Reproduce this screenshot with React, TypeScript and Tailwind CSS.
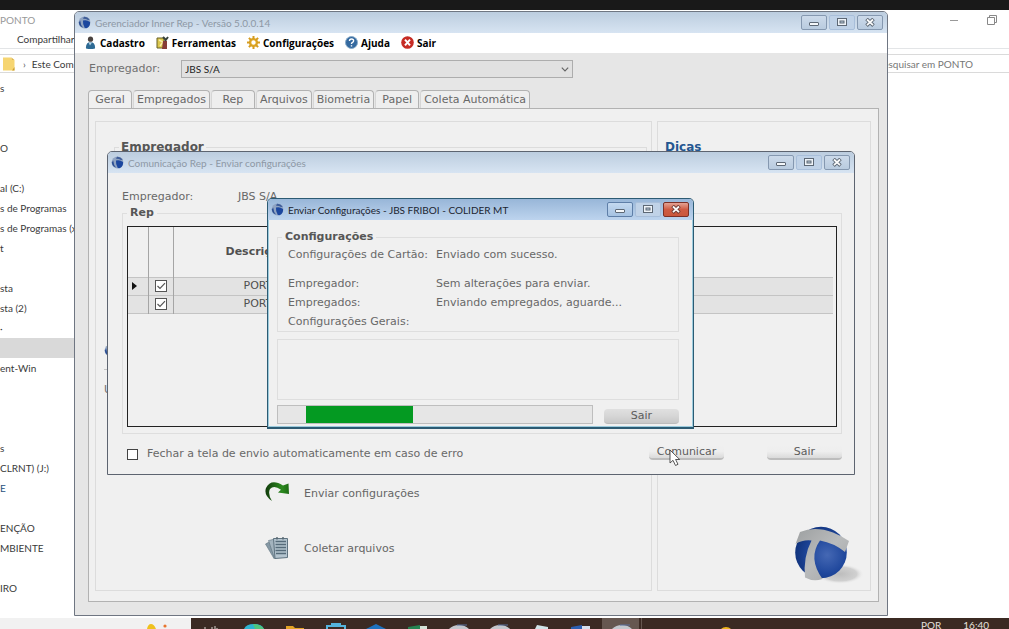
import type { ReactNode } from 'react'
import clsx from 'clsx'

const verdana = "font-['DejaVu_Sans',sans-serif]"
const segoe = "font-['Lato','Open_Sans',sans-serif]"

function Ball({ className }: { className?: string }) {
  return (
    <svg viewBox="0 0 70 62" className={className} aria-hidden="true">
      <defs>
        <radialGradient id="ball" cx="0.62" cy="0.55" r="0.6">
          <stop offset="0" stopColor="#4568b4" />
          <stop offset="0.6" stopColor="#1f479c" />
          <stop offset="1" stopColor="#12357f" />
        </radialGradient>
        <linearGradient id="band" x1="0" y1="0" x2="1" y2="1">
          <stop offset="0" stopColor="#9da0a1" />
          <stop offset="0.5" stopColor="#b9bbbc" />
          <stop offset="1" stopColor="#a3a5a6" />
        </linearGradient>
        <radialGradient id="shade">
          <stop offset="0" stopColor="#bdbdbd" />
          <stop offset="0.7" stopColor="#d0d0d0" />
          <stop offset="1" stopColor="#f0f0f0" stopOpacity="0" />
        </radialGradient>
      </defs>
      <ellipse cx="46" cy="49" rx="24" ry="10" fill="url(#shade)" />
      <circle cx="27" cy="27.5" r="25.8" fill="url(#ball)" />
      <path d="M1.5 19 L6 7 Q21 1 39 7.5 Q48 11 55 16 L51 27 Q40 18 26 15.5 Q13.5 33 28.5 54 Q19 57 11 52.5 Q9 32 17.5 15.5 Q9 14.5 1.5 19Z" fill="url(#band)" />
    </svg>
  )
}

function SmallBall() {
  return (
    <svg viewBox="0 0 13 13" className="size-[13px] shrink-0" aria-hidden="true">
      <circle cx="6.5" cy="6.5" r="5.9" fill="#8fa3c2" />
      <path d="M2.2 4.5 Q2.6 9 5 11.5 Q1.2 10.5 0.8 6.5Z" fill="#2c4f94" />
      <path d="M6 0.8 Q9.5 0.6 11.8 3.8 L10 4 Q8 2.7 5 2.8Z" fill="#3d5c98" />
      <path d="M5 4.6 Q8.5 3.4 12 6 Q12.5 10.5 8.5 12.2 L6.8 12 Q4.5 8.5 5 4.6Z" fill="#1c479f" />
    </svg>
  )
}

function CaptionButton({ kind, active, danger }: { kind: 'min' | 'max' | 'close'; active?: boolean; danger?: boolean }) {
  const label = { min: 'Minimizar', max: 'Maximizar', close: 'Fechar' }[kind]
  const ink = danger ? '#6d3a34' : '#5d6875'
  return (
    <button
      type="button"
      aria-label={label}
      className={clsx(
        'flex h-[15px] w-[26px] items-center justify-center rounded-[2px] border',
        danger && 'border-[#7c3027] bg-gradient-to-b from-[#e3a294] via-[#cf5b43] to-[#c9573c]',
        !danger && kind === 'max' && 'border-[#a9bfda] bg-[#c0d2e7]',
        !danger && kind !== 'max' && active && 'border-[#5f7fa8] bg-gradient-to-b from-[#c4d9f0] to-[#a5c2e2]',
        !danger && kind !== 'max' && !active && 'border-[#8598b0] bg-gradient-to-b from-[#ccdaea] to-[#b9cbdf]',
      )}
    >
      <svg viewBox="0 0 10 9" className="h-[9px] w-[10px]" aria-hidden="true">
        {kind === 'min' && <rect x="0.5" y="4.5" width="9" height="3" rx="0.5" fill="#f4f7fa" stroke={ink} />}
        {kind === 'max' && (
          <>
            <rect x="0.5" y="0.5" width="9" height="7" fill="#eef3f8" stroke={ink} />
            <rect x="3" y="3" width="4" height="2" fill="#b9c9da" stroke={ink} />
          </>
        )}
        {kind === 'close' && (
          <>
            <path d="M1.5 1 L8.5 7.6 M8.5 1 L1.5 7.6" stroke={ink} strokeWidth="3.6" />
            <path d="M2 1.5 L8 7.1 M8 1.5 L2 7.1" stroke="#fbfbfb" strokeWidth="1.8" />
          </>
        )}
      </svg>
    </button>
  )
}

function TitleBar({ title, active }: { title: string; active?: boolean }) {
  return (
    <div
      className={clsx(
        segoe,
        'flex h-[21px] shrink-0 items-center gap-1 pr-1 pl-[3px] text-[10px] leading-4',
        active
          ? 'bg-gradient-to-b from-[#98b6d8] to-[#bdd4ee] text-[#1c2430]'
          : 'bg-gradient-to-b from-[#bccddf] to-[#d7e4f2] text-[#8d98a5]',
      )}
    >
      <SmallBall />
      <span className="grow truncate">{title}</span>
      <div className="flex gap-[2px]">
        <CaptionButton kind="min" active={active} />
        <CaptionButton kind="max" active={active} />
        <CaptionButton kind="close" active={active} danger={active} />
      </div>
    </div>
  )
}

function PillButton({ children, solid }: { children: ReactNode; solid?: boolean }) {
  return (
    <button
      type="button"
      className={clsx(
        'h-[15px] w-[75px] rounded-[4px] text-[11px] leading-[13px] text-[#5c5c5c]',
        solid
          ? 'border-b border-[#bcbcbc] bg-gradient-to-b from-[#e0e0e0] via-[#d6d6d6] to-[#c8c8c8]'
          : 'border-b-2 border-[#bdbdbd] bg-gradient-to-b from-[#f0f0f0] via-[#eeeeee] to-[#dadada]',
      )}
    >
      {children}
    </button>
  )
}

const folders = [
  's', '', '', 'O', '', 'al (C:)', 's de Programas', 's de Programas (x', 't', '', 'sta', 'sta (2)', '·', '', 'ent-Win',
  '', '', '', 's', 'CLRNT) (J:)', 'E', '', 'ENÇÃO', 'MBIENTE', '', 'IRO',
]

function Explorer() {
  return (
    <div className={clsx(segoe, 'flex min-h-0 grow flex-col overflow-hidden bg-white text-[10px] leading-5 text-[#3a3a3a]')}>
      <div className="flex h-[19px] shrink-0 items-center justify-between pr-3 text-[#999999]">
        <span>PONTO</span>
        <div className="flex items-center gap-7">
          <svg viewBox="0 0 10 10" className="size-[10px]" aria-hidden="true">
            <path d="M1 5.5H9" stroke="#999" />
          </svg>
          <svg viewBox="0 0 10 10" className="size-[10px]" aria-hidden="true">
            <path d="M0.5 2.5H7.5V9.5H0.5Z M2.5 2.5V0.5H9.5V7.5H7.5" fill="none" stroke="#888" />
          </svg>
        </div>
      </div>
      <div className="h-5 shrink-0 border-b border-[#e3e5e7] pl-[17px]">Compartilhar</div>
      <div className="mt-[5px] flex h-[19px] shrink-0 items-center border-y border-[#dadada] pr-9 pl-[3px]">
        <svg viewBox="0 0 12 14" className="mr-2 h-[14px] w-3" aria-hidden="true">
          <path d="M0 0.5H8.5V3H11.5V13.5H0Z" fill="#f6d571" />
          <path d="M8.5 0.5V3H11.5" fill="#dfb64b" />
          <path d="M9 13.5L11.5 10V13.5Z" fill="#c99c33" />
        </svg>
        <span className="mr-[6px] text-[#555]">›</span>
        <span className="grow">Este Com</span>
        <span className="text-[#777]">Pesquisar em PONTO</span>
      </div>
      <ul className="mt-[5px]">
        {folders.map((name, i) => (
          <li key={i} className={clsx('h-5 w-[90px] overflow-hidden whitespace-nowrap', i === 13 && 'bg-[#d9d9d9]', name === 'E' && 'text-[#29527c]')}>
            {name}
          </li>
        ))}
      </ul>
    </div>
  )
}

const menu: { label: string; icon: ReactNode }[] = [
  {
    label: 'Cadastro',
    icon: (
      <>
        <circle cx="6.5" cy="3.2" r="2.6" fill="#4a4340" />
        <path d="M2 12.5 Q1.5 6.2 6.5 6.2 Q11.5 6.2 11 12.5 Q6.5 13.5 2 12.5Z" fill="#2d6a94" />
        <path d="M4.5 6.5L6 9.5L8 6.5Z" fill="#b7d4e6" />
      </>
    ),
  },
  {
    label: 'Ferramentas',
    icon: (
      <>
        <path d="M1 2H8V12H1Z" fill="#dcc74d" stroke="#676027" />
        <path d="M3 4L7 6L4 10" fill="none" stroke="#f8efab" strokeWidth="1.5" />
        <path d="M7 5H11V13H6Z" fill="#873c36" />
        <path d="M7 1L10 4M12 1L9 5" stroke="#36413b" strokeWidth="2" />
      </>
    ),
  },
  {
    label: 'Configurações',
    icon: (
      <>
        <circle cx="6.5" cy="6.5" r="3.4" fill="none" stroke="#dda522" strokeWidth="2.4" />
        <path
          d="M6.5 0V3M6.5 10V13M0 6.5H3M10 6.5H13M1.9 1.9L4 4M9 9L11.1 11.1M11.1 1.9L9 4M4 9L1.9 11.1"
          stroke="#d59c20"
          strokeWidth="2"
        />
      </>
    ),
  },
  {
    label: 'Ajuda',
    icon: (
      <>
        <circle cx="6.5" cy="6.5" r="6" fill="#34699f" stroke="#88abc9" />
        <path d="M4.5 5Q4.5 3 6.6 3T8.6 5Q8.5 6 7.2 6.6Q6.5 7 6.5 8M6.5 9.2V10.5" fill="none" stroke="#fff" strokeWidth="1.4" />
      </>
    ),
  },
  {
    label: 'Sair',
    icon: (
      <>
        <circle cx="6.5" cy="6.5" r="6.3" fill="#c62b24" />
        <path d="M4 3.7L9 9.3M9 3.7L4 9.3" stroke="#fff" strokeWidth="2" />
      </>
    ),
  },
]

const tabs = ['Geral', 'Empregados', 'Rep', 'Arquivos', 'Biometria', 'Papel', 'Coleta Automática']

function MainWindow() {
  return (
    <section className="absolute top-[11px] right-[121px] bottom-[13px] left-[74px] flex flex-col overflow-hidden rounded-t-[5px] border border-[#6f7682] bg-[#e6e6e6]">
      <TitleBar title="Gerenciador Inner Rep - Versão 5.0.0.14" />
      <nav className="flex h-5 shrink-0 items-center gap-[11px] bg-white pl-[9px] font-['Open_Sans',sans-serif] text-[10px] leading-4 font-bold text-black">
        {menu.map((m) => (
          <button key={m.label} type="button" className="flex items-center gap-[3px] pb-px">
            <svg viewBox="0 0 13 13" className="size-[13px]" aria-hidden="true">
              {m.icon}
            </svg>
            {m.label}
          </button>
        ))}
      </nav>
      <div className="flex h-[37px] shrink-0 items-center pb-[6px] pl-[14px] text-[#707070]">
        <label htmlFor="company" className="w-[92px] text-[11px] leading-4">
          Empregador:
        </label>
        <div className="relative">
          <select
            id="company"
            className={clsx(segoe, 'block h-[18px] w-[392px] appearance-none border border-[#adadad] bg-[#e1e1e1] px-[3px] text-[10px] leading-4 text-[#222]')}
          >
            <option>JBS S/A</option>
          </select>
          <svg viewBox="0 0 8 5" className="pointer-events-none absolute top-[7px] right-1 h-[5px] w-2" aria-hidden="true">
            <path d="M0.8 0.6L4 3.8L7.2 0.6" fill="none" stroke="#666" strokeWidth="1.2" />
          </svg>
        </div>
      </div>
      <div className="mx-[13px] flex items-end gap-px" role="tablist">
        {tabs.map((t, i) => (
          <button
            key={t}
            type="button"
            role="tab"
            aria-selected={i === 0}
            className={clsx(
              'h-[18px] min-w-[44px] rounded-t-[4px] border border-b-0 border-[#b2b2b2] px-[3px] text-[11px] leading-4 text-[#686868]',
              i === 0 ? 'bg-[#f0f0f0]' : 'border-l-[#d6d6d6] bg-[#eeeeee]',
            )}
          >
            {t}
          </button>
        ))}
      </div>
      <div className="mr-[8px] mb-[13px] ml-[13px] flex grow gap-[5px] border border-[#b2b2b2] bg-[#f0f0f0] pt-3 pr-[7px] pb-[10px] pl-[6px]">
        <div className="flex grow flex-col border border-[#dcdcdc] pt-4 pr-1 pl-[8px]">
          <fieldset className="ml-[10px] h-[206px] border border-[#dcdcdc] px-1">
            <legend className="px-[2px] text-[12px] leading-[18px] font-bold text-[#565656]">Empregador</legend>
          </fieldset>
          <div className="flex h-[130px] flex-col text-[11px] leading-4 text-[#707070]">
            <SmallBall />
            <hr className="mt-[12px] mb-[12px] w-10 border-[#c4c4c4]" />
            <span>U</span>
          </div>
          <div className="mt-2 ml-[161px] flex flex-col gap-[31px] text-[11px] text-[#666]">
            <a href="#enviar" className="flex items-center gap-[15px]">
              <svg viewBox="0 0 24 24" className="size-6" aria-hidden="true">
                <defs>
                  <linearGradient id="arrow" x1="0" x2="1">
                    <stop offset="0" stopColor="#123c0c" />
                    <stop offset="0.7" stopColor="#2c8a1f" />
                    <stop offset="1" stopColor="#1d6b14" />
                  </linearGradient>
                </defs>
                <path d="M7 19 Q-1.5 13 1 6 Q6 -4 18 3.5 L23.5 1.5 L24 12 L13 10.5 L16 7.8 Q9 2.5 5 7 Q2.5 12 7 19Z" fill="url(#arrow)" />
              </svg>
              Enviar configurações
            </a>
            <a href="#coletar" className="flex items-center gap-[15px]">
              <svg viewBox="0 0 24 24" className="size-6" aria-hidden="true">
                <path d="M0.5 7L6 4L11 19L9 21.500Z" fill="#8598a5" stroke="#60737f" strokeWidth="0.6" />
                <path d="M3.5 3.500L10 2L12 20L9.500 21.500Z" fill="#a3b3be" stroke="#60737f" strokeWidth="0.6" />
                <path d="M8.5 1.5H22.500V20.5L10 21.5Z" fill="#b4c4cf" stroke="#5f7380" />
                <path d="M10.5 4.500H21M10.5 7.500H21M10.5 10.500H21M10.5 13.500H21M11 16.500H21" stroke="#566b7a" strokeWidth="1.4" />
                <path d="M12 0V2.500M18 0V2.500" stroke="#56656f" strokeWidth="1.4" />
              </svg>
              Coletar arquivos
            </a>
          </div>
        </div>
        <aside className="flex w-[214px] shrink-0 flex-col justify-between border border-[#dcdcdc] pt-4 pb-[3px] pl-[7px]">
          <h2 className="text-[12px] leading-[18px] font-bold text-[#245791]">Dicas</h2>
          <Ball className="mr-[6px] h-[62px] w-[70px] self-end" />
        </aside>
      </div>
    </section>
  )
}

function RepTable() {
  return (
    <div className="grow border border-[#222] pr-[3px]">
      <table className="w-full table-fixed border-collapse text-[11px] leading-4 text-[#505050]">
        <colgroup>
          <col className="w-[20px]" />
          <col className="w-[25px]" />
          <col />
        </colgroup>
        <thead>
          <tr className="h-[50px] border-b border-[#c4c4c4]">
            <th aria-label="Atual" className="border-r border-[#a5a5a5]" />
            <th aria-label="Selecionado" className="border-r border-[#a5a5a5]" />
            <th className="pl-[52px] text-left">Descrição</th>
          </tr>
        </thead>
        <tbody>
          {[0, 1].map((row) => (
            <tr key={row} className="h-[18px] border-b border-[#c4c4c4] bg-[#e3e3e3]">
              <td className="border-r border-[#a5a5a5] p-0">
                {row === 0 && (
                  <svg viewBox="0 0 5 8" className="ml-1 h-2 w-[5px]" aria-hidden="true">
                    <path d="M0 0L5 4L0 8Z" fill="#111" />
                  </svg>
                )}
              </td>
              <td className="border-r border-[#a5a5a5] p-0">
                <div className="relative mx-auto size-3">
                  <input type="checkbox" defaultChecked aria-label={`PORT ${row + 1}`} className="block size-3 appearance-none border border-[#555] bg-white" />
                  <svg viewBox="0 0 12 12" className="pointer-events-none absolute inset-0" aria-hidden="true">
                    <path d="M2.5 6L5 8.5L10 3.2" fill="none" stroke="#555" strokeWidth="1.2" />
                  </svg>
                </div>
              </td>
              <td className="p-0 pl-[70px]">PORT</td>
            </tr>
          ))}
        </tbody>
      </table>
    </div>
  )
}

function CommunicationDialog() {
  return (
    <section className="absolute top-[151px] left-[107px] flex h-[324px] w-[748px] flex-col overflow-hidden rounded-t-[5px] border border-[#5d6470] bg-[#f0f0f0] text-[11px] text-[#686868]">
      <TitleBar title="Comunicação Rep - Enviar configurações" />
      <div className="flex grow flex-col pt-4 pr-3 pl-[14px]">
        <p className="flex leading-4">
          <span className="w-[116px]">Empregador:</span>
          <span>JBS S/A</span>
        </p>
        <fieldset className="h-[229px] border border-[#dedede] px-1">
          <legend className="px-[3px] leading-4 font-bold text-[#565656]">Rep</legend>
          <div className="flex h-[206px] flex-col pt-[5px]">
            <RepTable />
          </div>
        </fieldset>
        <div className="flex h-9 items-center gap-[43px] pl-[5px]">
          <label className="flex grow items-center gap-[9px] pt-1">
            <input type="checkbox" className="size-[11px] appearance-none border border-[#444] bg-white" />
            Fechar a tela de envio automaticamente em caso de erro
          </label>
          <PillButton>Comunicar</PillButton>
          <PillButton>Sair</PillButton>
        </div>
      </div>
    </section>
  )
}

const status = [
  ['Configurações de Cartão:', 'Enviado com sucesso.'],
  ['Empregador:', 'Sem alterações para enviar.'],
  ['Empregados:', 'Enviando empregados, aguarde...'],
  ['Configurações Gerais:', ''],
]

function SendDialog() {
  return (
    <section className="absolute top-[198px] left-[267px] flex h-[231px] w-[427px] flex-col overflow-hidden rounded-t-[5px] border border-b-2 border-[#2c5b73] bg-[#f0f0f0] text-[11px] text-[#686868]">
      <TitleBar title="Enviar Configurações - JBS FRIBOI - COLIDER MT" active />
      <div className="flex grow flex-col border border-t-0 border-[#9ccbdd] pt-[9px] pr-[13px] pl-2">
        <fieldset className="h-[103px] border border-[#dedede] px-1">
          <legend className="px-[3px] leading-4 font-bold text-[#565656]">Configurações</legend>
          <dl className="grid grid-cols-[148px_1fr] pl-[6px] leading-[19px]">
            {status.map(([name, value], i) => (
              <div key={name} className={clsx('col-span-2 grid grid-cols-subgrid', i === 0 && 'mb-[10px]')}>
                <dt>{name}</dt>
                <dd>{value}</dd>
              </div>
            ))}
          </dl>
        </fieldset>
        <div className="mt-[7px] h-[61px] border border-[#dedede]" />
        <div className="mt-1 flex items-center gap-[11px]">
          <div role="progressbar" aria-label="Envio" className="h-[19px] grow border border-[#bebebe] bg-[#e6e6e6] pl-7">
            <div className="h-full w-[107px] bg-[#049a22]" />
          </div>
          <div className="pt-1">
            <PillButton solid>Sair</PillButton>
          </div>
        </div>
      </div>
    </section>
  )
}

function Taskbar() {
  return (
    <footer className={clsx(segoe, 'flex h-[11px] shrink-0 overflow-hidden bg-[#3b2a23] text-[10px] leading-[14px] text-[#e5e0dc]')}>
      <div className="w-[191px] shrink-0 bg-[#f1f1f1]">
        <svg viewBox="0 0 191 11" className="h-[11px] w-[191px]" aria-hidden="true">
          <path d="M147 11Q148 6 151 6T156 11Z" fill="#efc11e" />
          <circle cx="165" cy="8" r="1.6" fill="#e8752e" />
        </svg>
      </div>
      <svg viewBox="191 0 560 11" className="h-[11px] w-[560px] shrink-0" aria-hidden="true">
        <rect x="602" width="37" height="11" fill="#665750" />
        <rect x="641" width="1" height="11" fill="#665750" />
        <path d="M205 9V11M212 9V11M215 8V11M217 10V11" stroke="#d9d4d0" />
        <path d="M244 11Q246 6 254 6T264 11Z" fill="#2eb5d2" />
        <path d="M253 6Q261 6 264 11H255Z" fill="#4fc77c" />
        <path d="M286 8H293L295 10H304V11H286Z" fill="#e2a325" />
        <path d="M327 11V8H345V11M332 8V6H340V8" fill="none" stroke="#55b4dd" strokeWidth="2" />
        <path d="M366 11L376 6L386 11Z" fill="#1e72bf" />
        <path d="M408 9L420 7V11H408Z" fill="#258451" />
        <path d="M420 8H427V11H420Z" fill="#d3e3d7" />
        <path d="M449 11Q453 7 459 7T469 11Z M490 11Q494 7 500 7T510 11Z M612 11Q616 7 622 7T632 11Z" fill="#c2c6cc" />
        <path d="M457 7H467M498 7H508M620 7H630" stroke="#58719f" />
        <path d="M535 11L537 7L548 9V11Z" fill="#cfe4e8" />
        <path d="M571 9L582 7V11H571Z" fill="#2c5eb0" />
        <path d="M582 8H590V11H582Z" fill="#d6dfed" />
        <path d="M721 11Q723 9 726 9T731 11Z" fill="#efb51c" />
      </svg>
      <div className="flex grow justify-end gap-[22px] pr-5">
        <span>POR</span>
        <time>16:40</time>
      </div>
    </footer>
  )
}

export default function App() {
  return (
    <main className={clsx(verdana, 'relative flex h-screen flex-col overflow-hidden bg-[#191919]')}>
      <div className="h-[10px] shrink-0" />
      <Explorer />
      <Taskbar />
      <MainWindow />
      <CommunicationDialog />
      <SendDialog />
      <svg viewBox="0 0 12 18" className="pointer-events-none absolute top-[449px] left-[669px] h-[18px] w-3" aria-hidden="true">
        <path d="M1 1V14L4 11.3L6.5 16.5L9 15.3L6.6 10.5H10.7Z" fill="#fff" stroke="#444" strokeWidth="0.9" />
      </svg>
    </main>
  )
}
